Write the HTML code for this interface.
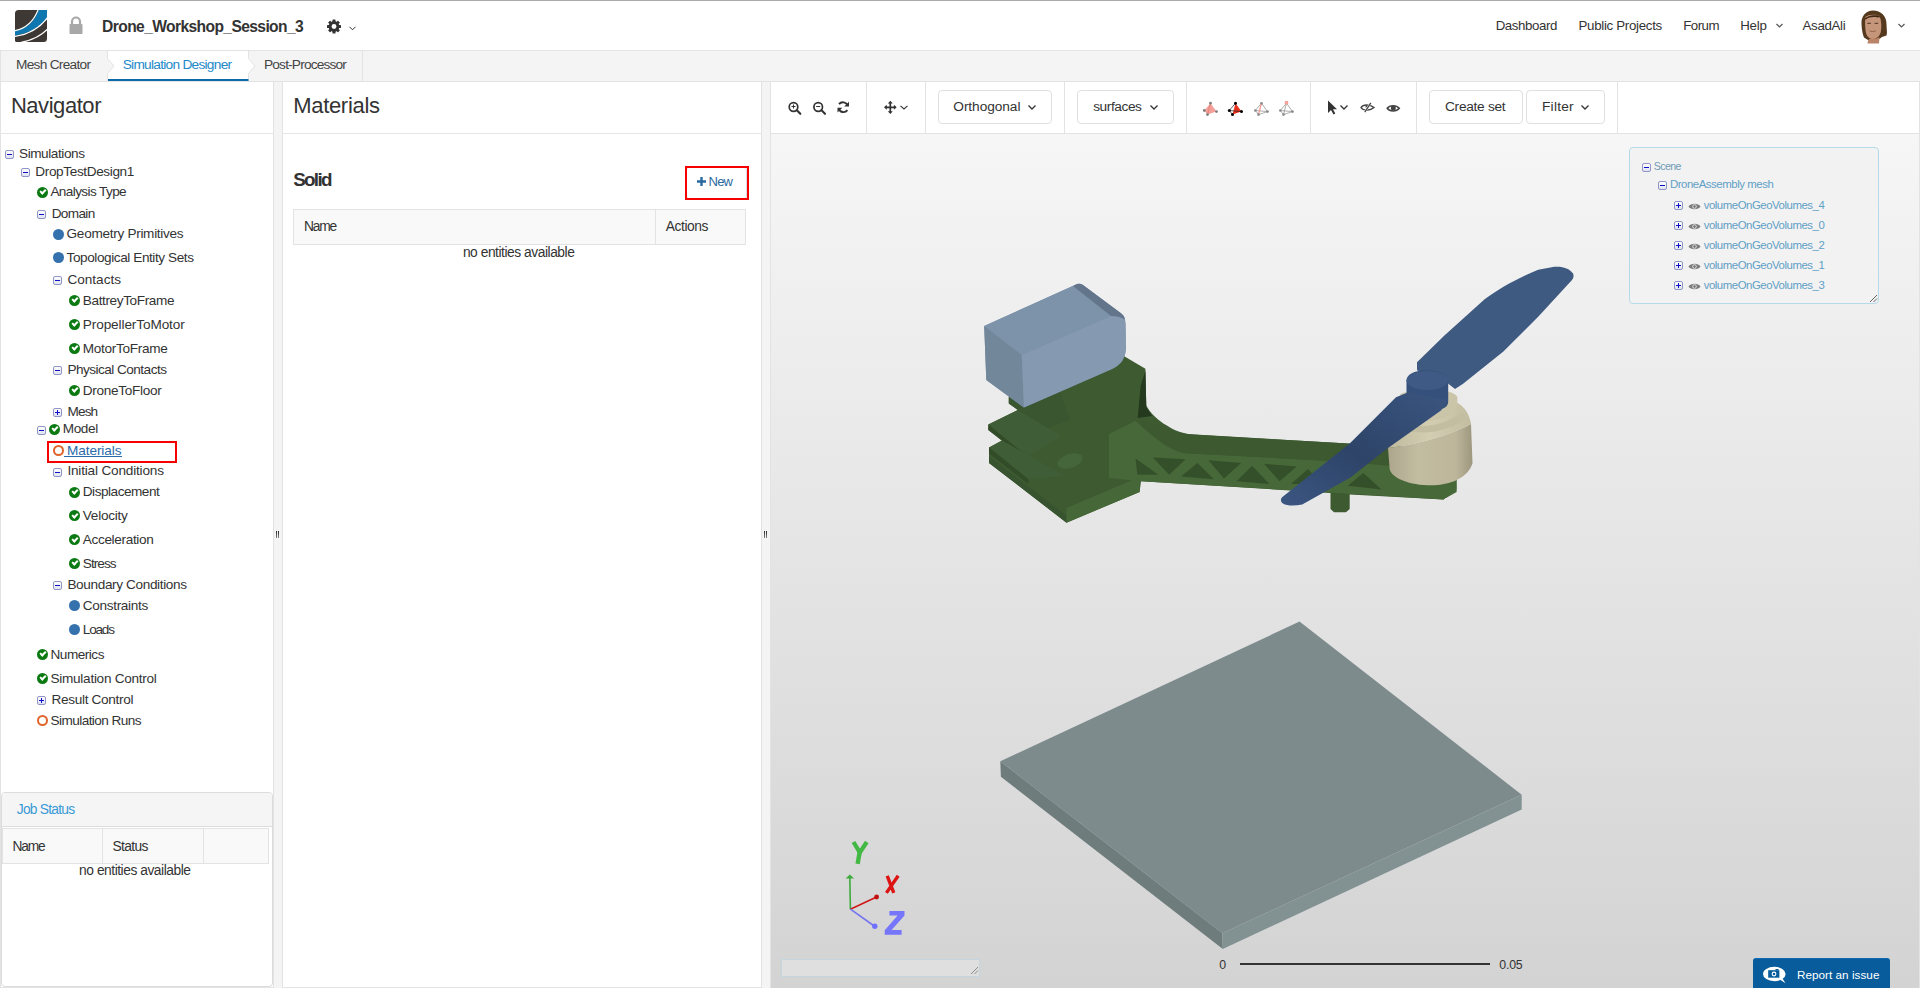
<!DOCTYPE html>
<html><head><meta charset="utf-8"><style>
html,body{margin:0;padding:0;}
body{width:1920px;height:988px;overflow:hidden;position:relative;background:#fff;font-family:"Liberation Sans", sans-serif;}
.a{position:absolute;box-sizing:border-box;}
.t{position:absolute;white-space:pre;line-height:1.117;}
.tb{position:absolute;width:9px;height:9px;box-sizing:border-box;border:1px solid #8f95c6;border-radius:2px;background:linear-gradient(#fff,#dfe2f0);}
.tb::before{content:"";position:absolute;left:1px;top:3px;width:5px;height:1px;background:#1010c8;}
.tb i{position:absolute;left:3px;top:1px;width:1px;height:5px;background:#1010c8;}
.ck{position:absolute;width:11px;height:11px;border-radius:50%;background:#0b7a12;}
.ck::after{content:"";position:absolute;left:2.6px;top:2.4px;width:4.2px;height:2.2px;border-left:2px solid #fff;border-bottom:2px solid #fff;transform:rotate(-45deg);}
.dt{position:absolute;width:11px;height:11px;border-radius:50%;background:#3571ad;}
.rg{position:absolute;width:11px;height:11px;box-sizing:border-box;border-radius:50%;border:2px solid #e0642c;}
</style></head><body>
<!-- top line -->
<div class="a" style="left:0;top:0;width:1920px;height:1px;background:#a9a9a9"></div>
<!-- tab bar -->
<div class="a" style="left:0;top:50px;width:1920px;height:32px;background:#f4f4f4;border-top:1px solid #e3e3e3;border-bottom:1px solid #e3e3e3"></div>
<!-- logo -->
<svg class="a" style="left:15px;top:10px" width="32" height="32" viewBox="0 0 32 32">
  <defs><clipPath id="lg"><path d="M3.5 0H32V28.5A3.5 3.5 0 0 1 28.5 32H1.5Q0 32 0 30.5V3.5A3.5 3.5 0 0 1 3.5 0Z"/></clipPath></defs>
  <g clip-path="url(#lg)">
    <rect width="32" height="32" fill="#3d3834"/>
    <path d="M24 -1H33V6.8C25 17.5 13.5 23.8 -1 25.8V21.2C11 19 19 13 24 -1Z" fill="#0f77b0"/>
    <path d="M23.4 -1 C18.5 12.5 10.5 18.8 -1 20.9" fill="none" stroke="#fff" stroke-width="1.2"/>
    <path d="M33 7 C25 18 13.5 24.5 -1 26.6" fill="none" stroke="#fff" stroke-width="1.3"/>
    <path d="M33 18.6 C26 26 18 30.2 6 32.3" fill="none" stroke="#fff" stroke-width="1.3"/>
  </g>
</svg>
<!-- lock -->
<svg class="a" style="left:68px;top:16px" width="16" height="19" viewBox="0 0 16 19">
  <path d="M4 8V5.5A4 4 0 0 1 12 5.5V8" fill="none" stroke="#a8a8a8" stroke-width="2.2"/>
  <rect x="1.5" y="8" width="13" height="10" rx="0.8" fill="#a8a8a8"/>
</svg>
<!-- gear -->
<svg class="a" style="left:326px;top:19px" width="16" height="15" viewBox="-8 -7.5 16 15">
  <g fill="#333"><circle r="5.4"/><rect x="-1.5" y="-7" width="3" height="3" rx="0.6" transform="rotate(0)"/><rect x="-1.5" y="-7" width="3" height="3" rx="0.6" transform="rotate(45)"/><rect x="-1.5" y="-7" width="3" height="3" rx="0.6" transform="rotate(90)"/><rect x="-1.5" y="-7" width="3" height="3" rx="0.6" transform="rotate(135)"/><rect x="-1.5" y="-7" width="3" height="3" rx="0.6" transform="rotate(180)"/><rect x="-1.5" y="-7" width="3" height="3" rx="0.6" transform="rotate(225)"/><rect x="-1.5" y="-7" width="3" height="3" rx="0.6" transform="rotate(270)"/><rect x="-1.5" y="-7" width="3" height="3" rx="0.6" transform="rotate(315)"/></g>
  <circle r="2.4" fill="#fff"/>
</svg>
<svg class="a" style="left:348px;top:25px" width="9" height="7" viewBox="0 0 9 7"><path d="M1.5 1.8 L4.5 4.8 L7.5 1.8" fill="none" stroke="#333" stroke-width="1"/></svg>
<!-- help chevron -->
<svg class="a" style="left:1775px;top:22px" width="9" height="7" viewBox="0 0 9 7"><path d="M1.5 2 L4.5 5 L7.5 2" fill="none" stroke="#555" stroke-width="1.2"/></svg>
<svg class="a" style="left:1897px;top:22px" width="9" height="7" viewBox="0 0 9 7"><path d="M1.5 2 L4.5 5 L7.5 2" fill="none" stroke="#555" stroke-width="1.2"/></svg>
<!-- avatar -->
<svg class="a" style="left:1860px;top:10px" width="28" height="34" viewBox="1860 10 28 34">
  <path d="M1861.5 24C1861 16 1866 10.5 1873 10.5C1881 10.5 1886.5 16 1886.5 24C1886.5 29 1887.5 33 1886.5 35.5L1882 37L1878 40H1868L1864 37.5C1862 33 1861.8 28 1861.5 24Z" fill="#55391f"/>
  <path d="M1865.5 17C1868 14.5 1876 14 1879.5 16C1881.5 20 1881.8 28 1880.5 33C1879 37 1876 39 1872.5 39C1869.5 39 1867 36.5 1866 33C1865 28 1864.8 21 1865.5 17Z" fill="#c6967a"/>
  <path d="M1867.5 43.5C1868 40 1868.5 38 1872 39C1875 39 1878 38 1879.5 37L1879 43.5Z" fill="#b98468"/>
  <path d="M1864.5 19C1867 15.5 1874 14.5 1878.5 15.5C1881 17 1882 19 1882.5 22C1882 18 1880 16.5 1877.5 17.5C1874 16.5 1868.5 17 1866 19.5Z" fill="#3e2814"/>
  <path d="M1867.3 23.3h3.6 M1874.6 23.3h3.6" stroke="#4a3324" stroke-width="1"/>
  <path d="M1869.5 30.8C1871.5 31.8 1874 31.8 1876 30.8" stroke="#8f5f4a" stroke-width="0.9" fill="none"/>
</svg>
<!-- tabs: active white tab with arrows -->
<svg class="a" style="left:0;top:51px" width="370" height="30" viewBox="0 0 370 30">
  <path d="M107.5 0 H248.5 V7.5 L255 15 L248.5 22.5 V30 H107.5 V22.5 L114 15 L107.5 7.5 Z" fill="#fff"/>
  <path d="M107.5 0 V7.5 L114 15 L107.5 22.5 V30" fill="none" stroke="#e3e3e3" stroke-width="1"/>
  <path d="M248.5 0 V7.5 L255 15 L248.5 22.5 V30" fill="none" stroke="#e3e3e3" stroke-width="1"/>
  <path d="M362.5 0 V30" fill="none" stroke="#e3e3e3" stroke-width="1"/>
  <rect x="108" y="28" width="140.5" height="2" fill="#0b6aa8"/>
</svg>

<div class="a" style="left:0;top:51px;width:1px;height:31px;background:#e3e3e3"></div>

<!-- panels background -->
<div class="a" style="left:0;top:82px;width:1920px;height:906px;background:#f4f4f4"></div>
<div class="a" style="left:0;top:81px;width:274px;height:907px;background:#fff;border:1px solid #e3e3e3"></div>
<div class="a" style="left:0;top:133px;width:274px;height:1px;background:#e6e6e6"></div>
<div class="a" style="left:282px;top:81px;width:480px;height:907px;background:#fff;border:1px solid #e3e3e3"></div>
<div class="a" style="left:282px;top:133px;width:480px;height:1px;background:#e6e6e6"></div>
<!-- viewer -->
<div class="a" style="left:770px;top:81px;width:1150px;height:907px;background:linear-gradient(#f6f6f6 0px,#f6f6f6 52px,#d3d3d3 907px);border:1px solid #e3e3e3;border-bottom:none"></div>
<div class="a" style="left:770px;top:81px;width:1150px;height:53px;background:#fff;border:1px solid #e3e3e3"></div>
<!-- materials table -->
<div class="a" style="left:293px;top:209px;width:453px;height:36px;background:#f9f9f9;border:1px solid #e3e3e3"></div>
<div class="a" style="left:655px;top:209px;width:1px;height:36px;background:#e3e3e3"></div>
<!-- new button -->
<div class="a" style="left:686px;top:167px;width:61px;height:32px;border:1px solid #d8dde3;border-radius:3px;background:#fff"></div>
<div class="a" style="left:684.5px;top:165.5px;width:64px;height:34px;border:2px solid #f60000"></div>
<svg class="a" style="left:696px;top:176px" width="11" height="11" viewBox="0 0 11 11"><path d="M5.5 1V10M1 5.5H10" stroke="#2a6aa0" stroke-width="2.4"/></svg>
<!-- materials highlight box -->
<div class="a" style="left:47px;top:441px;width:130px;height:22px;border:2px solid #f60000"></div>
<!-- job status -->
<div class="a" style="left:1px;top:792px;width:272px;height:195px;border:1px solid #dcdcdc;border-radius:4px;background:#fff"></div>
<div class="a" style="left:2px;top:793px;width:270px;height:34px;background:#f5f5f5;border-bottom:1px solid #dcdcdc;border-radius:3px 3px 0 0"></div>
<div class="a" style="left:2px;top:828px;width:267px;height:36px;background:#f9f9f9;border:1px solid #e3e3e3"></div>
<div class="a" style="left:102px;top:828px;width:1px;height:36px;background:#e3e3e3"></div>
<div class="a" style="left:203px;top:828px;width:1px;height:36px;background:#e3e3e3"></div>
<!-- resize handles -->
<div class="a" style="left:276px;top:531px;width:1px;height:7px;background:linear-gradient(#222,#888)"></div>
<div class="a" style="left:278px;top:531px;width:1px;height:7px;background:linear-gradient(#222,#888)"></div>
<div class="a" style="left:764px;top:531px;width:1px;height:7px;background:linear-gradient(#222,#888)"></div>
<div class="a" style="left:766px;top:531px;width:1px;height:7px;background:linear-gradient(#222,#888)"></div>

<div class="a" style="left:64px;top:456px;width:58px;height:1.4px;background:#2a6aa8"></div>

<!-- toolbar separators -->
<div class="a" style="left:866px;top:82px;width:1px;height:51px;background:#e3e3e3"></div>
<div class="a" style="left:925px;top:82px;width:1px;height:51px;background:#e3e3e3"></div>
<div class="a" style="left:1064px;top:82px;width:1px;height:51px;background:#e3e3e3"></div>
<div class="a" style="left:1186px;top:82px;width:1px;height:51px;background:#e3e3e3"></div>
<div class="a" style="left:1310px;top:82px;width:1px;height:51px;background:#e3e3e3"></div>
<div class="a" style="left:1416px;top:82px;width:1px;height:51px;background:#e3e3e3"></div>
<div class="a" style="left:1617px;top:82px;width:1px;height:51px;background:#e3e3e3"></div>
<!-- buttons -->
<div class="a" style="left:938px;top:90px;width:114px;height:34px;border:1px solid #e0e0e0;border-radius:4px"></div>
<div class="a" style="left:1077px;top:90px;width:97px;height:34px;border:1px solid #e0e0e0;border-radius:4px"></div>
<div class="a" style="left:1429px;top:90px;width:94px;height:34px;border:1px solid #e0e0e0;border-radius:4px"></div>
<div class="a" style="left:1526px;top:90px;width:79px;height:34px;border:1px solid #e0e0e0;border-radius:4px"></div>
<!-- chevrons -->
<svg class="a" style="left:1027px;top:104px" width="10" height="7" viewBox="0 0 10 7"><path d="M1.5 1.5 L5 5 L8.5 1.5" fill="none" stroke="#333" stroke-width="1.3"/></svg>
<svg class="a" style="left:1149px;top:104px" width="10" height="7" viewBox="0 0 10 7"><path d="M1.5 1.5 L5 5 L8.5 1.5" fill="none" stroke="#333" stroke-width="1.3"/></svg>
<svg class="a" style="left:1580px;top:104px" width="10" height="7" viewBox="0 0 10 7"><path d="M1.5 1.5 L5 5 L8.5 1.5" fill="none" stroke="#333" stroke-width="1.3"/></svg>
<svg class="a" style="left:899px;top:104px" width="10" height="7" viewBox="0 0 10 7"><path d="M1.5 1.8 L5 5 L8.5 1.8" fill="none" stroke="#333" stroke-width="1.1"/></svg>
<svg class="a" style="left:1339px;top:104px" width="10" height="7" viewBox="0 0 10 7"><path d="M1.5 1.5 L5 5 L8.5 1.5" fill="none" stroke="#333" stroke-width="1.3"/></svg>
<!-- zoom in/out, refresh, move -->
<svg class="a" style="left:780px;top:92px" width="130" height="30" viewBox="780 92 130 30">
  <circle cx="793.5" cy="107" r="4.3" fill="none" stroke="#333" stroke-width="1.7"/>
  <path d="M796.8 110.3L800.3 113.8" stroke="#333" stroke-width="2.1" stroke-linecap="round"/>
  <path d="M791.5 106.5H795.5M793.5 104.5V108.5" stroke="#333" stroke-width="1"/>
  <circle cx="818.2" cy="107" r="4.3" fill="none" stroke="#333" stroke-width="1.7"/>
  <path d="M821.5 110.3L825 113.8" stroke="#333" stroke-width="2.1" stroke-linecap="round"/>
  <path d="M816.2 106.5H820.2" stroke="#333" stroke-width="1"/>
  <path d="M847.6 105.5A5 5 0 0 0 839 104.2" fill="none" stroke="#333" stroke-width="1.9"/>
  <path d="M838.8 108.8A5 5 0 0 0 847.4 110.2" fill="none" stroke="#333" stroke-width="1.9"/>
  <path d="M849 101.8V106.6H844.2Z" fill="#333"/>
  <path d="M837.5 112.6V107.8H842.3Z" fill="#333"/>
  <path d="M890.3 102.5V112.5M885.5 107.3H895.2" stroke="#333" stroke-width="1.7"/>
  <path d="M890.3 100.8L892.8 103.6H887.8Z M890.3 114L892.8 111.2H887.8Z M884 107.3L886.8 104.8V109.8Z M896.7 107.3L893.9 104.8V109.8Z" fill="#333"/>
</svg>
<!-- tetra icons -->
<svg class="a" style="left:1202.0px;top:100px" width="17" height="17" viewBox="-2 0 17 17"><path d="M6.5 3.2L0.3 10.5L3.5 14.6L12.5 11.6Z" fill="#f4a098"/><path d="M6.5 3.2L3.5 14.6" stroke="#e07c70" stroke-width="0.8"/><circle cx="6.5" cy="3.2" r="1.4" fill="#808080"/><circle cx="0.3" cy="10.5" r="1.4" fill="#808080"/><circle cx="12.5" cy="11.6" r="1.4" fill="#808080"/><circle cx="3.5" cy="14.6" r="1.4" fill="#808080"/></svg>
<svg class="a" style="left:1227.0px;top:100px" width="17" height="17" viewBox="-2 0 17 17"><path d="M6.5 3.2L3.5 14.6L12.5 11.6Z" fill="#e8321e"/><path d="M6.5 3.2L0.3 10.5L3.5 14.6M0.3 10.5L12.5 11.6" fill="none" stroke="#222" stroke-width="0.7"/><circle cx="6.5" cy="3.2" r="1.5" fill="#000"/><circle cx="0.3" cy="10.5" r="1.5" fill="#000"/><circle cx="12.5" cy="11.6" r="1.5" fill="#000"/><circle cx="3.5" cy="14.6" r="1.5" fill="#000"/></svg>
<svg class="a" style="left:1252.5px;top:100px" width="17" height="17" viewBox="-2 0 17 17"><path d="M6.5 3.2L0.3 10.5L3.5 14.6L12.5 11.6ZM0.3 10.5L12.5 11.6" fill="none" stroke="#777" stroke-width="0.6"/><path d="M6.5 3.2L3.5 14.6" stroke="#f49a90" stroke-width="1.3"/><circle cx="6.5" cy="3.2" r="1.3" fill="#8a8a8a"/><circle cx="0.3" cy="10.5" r="1.3" fill="#8a8a8a"/><circle cx="12.5" cy="11.6" r="1.3" fill="#8a8a8a"/><circle cx="3.5" cy="14.6" r="1.3" fill="#8a8a8a"/></svg>
<svg class="a" style="left:1277.5px;top:100px" width="17" height="17" viewBox="-2 0 17 17"><path d="M6.5 3.2L0.3 10.5L3.5 14.6L12.5 11.6ZM0.3 10.5L12.5 11.6M6.5 3.2L3.5 14.6" fill="none" stroke="#777" stroke-width="0.6"/><circle cx="0.3" cy="10.5" r="1.3" fill="#8a8a8a"/><circle cx="12.5" cy="11.6" r="1.3" fill="#8a8a8a"/><circle cx="3.5" cy="14.6" r="1.3" fill="#8a8a8a"/><circle cx="6.5" cy="2.7" r="1.9" fill="#f7a096"/></svg>
<!-- cursor -->
<svg class="a" style="left:1327px;top:100px" width="11" height="15" viewBox="0 0 11 15"><path d="M1 0.5V13L4 10L6.5 14.5L8.3 13.5L6 9.3H10Z" fill="#333"/></svg>
<!-- eye slash -->
<svg class="a" style="left:1360px;top:102px" width="15" height="11" viewBox="0 0 15 11"><path d="M1 5.5C3 2 10 2 14 5.5C10 9 3 9 1 5.5Z" fill="none" stroke="#444" stroke-width="1.5"/><path d="M6 5.5A1.8 1.8 0 0 1 8.5 3.8" fill="none" stroke="#444" stroke-width="1.4"/><path d="M4.5 10.5L11 0.5" stroke="#fff" stroke-width="2.2"/><path d="M4.8 10.2L10.8 0.8" stroke="#444" stroke-width="1.3"/></svg>
<!-- eye -->
<svg class="a" style="left:1385.5px;top:102.5px" width="15" height="11" viewBox="0 0 15 11"><path d="M1.2 5.3C3.5 1.8 10.5 1.8 13.3 5.3C10.5 8.8 3.5 8.8 1.2 5.3Z" fill="none" stroke="#444" stroke-width="1.6"/><circle cx="7.3" cy="5.1" r="2.5" fill="#444"/></svg>

<svg class="a" style="left:770px;top:134px" width="1150" height="854" viewBox="770 134 1150 854">
<defs>
  <linearGradient id="blade2" x1="0" y1="1" x2="1" y2="0"><stop offset="0" stop-color="#3b5682"/><stop offset="0.45" stop-color="#2e4468"/><stop offset="1" stop-color="#3a5580"/></linearGradient>
  <linearGradient id="motorside" x1="0" y1="0" x2="1" y2="0"><stop offset="0" stop-color="#aca68c"/><stop offset="0.35" stop-color="#c2bca1"/><stop offset="0.8" stop-color="#bdb69b"/><stop offset="1" stop-color="#9d977e"/></linearGradient>
  <linearGradient id="motortop" x1="0" y1="0" x2="1" y2="0"><stop offset="0" stop-color="#bfb99d"/><stop offset="0.5" stop-color="#d3cdb2"/><stop offset="1" stop-color="#c2bca0"/></linearGradient>
</defs>
<!-- ground plate -->
<path d="M1299.5 621.6L1521.7 794.7L1222.4 933.2L1000.3 761.3Z" fill="#7e8b8d"/>
<path d="M1000.3 761.3L1222.4 933.2L1222.8 948.9L1000.9 776.7Z" fill="#6f7c7c"/>
<path d="M1222.4 933.2L1521.7 794.7L1521.7 809.6L1222.8 948.9Z" fill="#829192"/>

<!-- green frame base silhouette -->
<path d="M1008.8 396.7L1124.2 356.3L1145.4 368.8L1146.3 405.4C1150 413 1158 420 1166 425C1175 431 1183 434 1195 434.5L1348 443.5L1400 446L1456 478L1456.3 489.4L1443.5 499.4L1349.7 494.5L1349.7 509L1346 512.2L1334 512.2L1330.5 509L1330.5 493L1141 481.2L1139.6 491.9L1066.5 522.7L989 463L989 447.6L1002 440.4L988.3 429.9L988.3 424.6L1017.9 410.1L1008.8 403.5Z" fill="#3e5a31"/>
<!-- arm side face (lighter) -->
<path d="M1109 434L1135.4 420.8C1150 434 1165 448 1183 453L1348.7 462L1400 466L1456.3 478.4L1456.3 489.4L1443.5 499.4L1141 481.2L1109 478Z" fill="#476838"/>
<!-- arm top face -->
<path d="M1137.3 418.3C1150 424 1160 428 1172 431C1180 433.5 1190 434.5 1200 435L1348 443.5L1390 447L1390 466L1348.7 462L1183 453C1165 448 1150 434 1137.3 418.3Z" fill="#3d5930"/>
<!-- dark shadow at block corner -->
<path d="M1145.4 370.8L1146.3 407.3L1152 416L1137.7 418L1140.6 386.2Z" fill="#24391d"/>
<!-- platform lighter face -->

<!-- triangle holes -->
<g fill="#34502a">
<path d="M1135.5 458.4L1158.3 474.8L1137.3 474.8Z"/>
<path d="M1152.8 457.5L1185.6 459.3L1169.2 474.8Z"/>
<path d="M1197.4 462.9L1213.9 479.3L1181 476.6Z"/>
<path d="M1208.4 460.2L1241.2 462.9L1223.9 478.4Z"/>
<path d="M1252.1 465.7L1269.4 483.9L1236.6 481.2Z"/>
<path d="M1264 463.8L1296.8 466.6L1279.5 481.2Z"/>
<path d="M1308 469L1322 484L1291 484Z"/>
<path d="M1363.3 473L1381.5 489.4L1347.8 485.7Z"/>
</g>
<!-- left plates detail -->
<path d="M988.3 424.6L1017.9 410.1L1062 436L1027.8 456.8Z" fill="#3f5d36"/>
<path d="M988.3 424.6L1027.8 456.8L1027.8 461L988.3 429.9Z" fill="#324c2a"/>
<path d="M989 447.6L1002 440.4L1066 476L1028.4 479.2Z" fill="#3f5d36"/>
<path d="M989 447.6L1028.4 479.2L1028.4 484L989 453.6Z" fill="#324c2a"/>
<path d="M989 456.2L1066.6 516L1066.6 522.7L989 463Z" fill="#37532f"/>
<path d="M1066.5 522.7L1066.5 508L1139.6 477L1139.6 491.9Z" fill="#466838"/>
<path d="M1017.9 410.1L1008.8 403.5L1008.8 396.7L1023.9 407.5L1060 392L1070 420L1048 428Z" fill="#3a5630"/>
<ellipse cx="1070" cy="461" rx="13" ry="7" transform="rotate(-18 1070 461)" fill="#44663a"/>
<!-- battery -->
<linearGradient id="bband" x1="0" y1="0" x2="1" y2="-0.6"><stop offset="0" stop-color="#7d93aa"/><stop offset="0.6" stop-color="#5d6f84"/><stop offset="1" stop-color="#7e92a8"/></linearGradient>
<path d="M984.2 326L1077 284Q1080 283 1083 285L1121 313.3Q1125.5 316 1125.5 324L1125.9 349C1125 360 1120 365 1112 369L1023.9 407.5L986.3 379.9Z" fill="#7b90a6"/>
<path d="M984.2 326L1073 286L1111 316L1021.8 355.1Z" fill="#7d93aa"/>
<path d="M1073 286L1077 284Q1080 283 1083 285L1121 313.3Q1124 315.5 1125 319L1111 316Z" fill="#62758b"/>
<path d="M984.2 326L1021.8 355.1L1023.9 407.5L986.3 379.9Z" fill="#73879b"/>
<path d="M1021.8 355.1L1111 316Q1125.5 316 1125.5 324L1125.9 349C1125 360 1120 365 1112 369L1023.9 407.5Z" fill="#8599b0"/>

<!-- motor base green -->
<path d="M1388 466L1456.6 478L1456.6 492L1446 498L1400 494Z" fill="#476838"/>
<!-- motor body -->
<path d="M1388 448C1405 446 1440 440 1471 424L1472.5 463.3C1468 478 1450 486 1427.7 485.3C1405 484 1392 477 1389.7 469.4Z" fill="url(#motorside)"/>
<path d="M1388 448C1390 428 1420 405 1450 401C1462 402 1469 412 1471 424C1440 440 1405 446 1388 448Z" fill="url(#motortop)"/>
<path d="M1398 421C1420 432 1448 424 1462 412C1464 414 1466 416 1467 418C1448 432 1418 438 1396 426Z" fill="#c3bda2"/>
<!-- small ring -->
<path d="M1400.4 394C1420 386 1450 388 1457.3 396.5L1457.3 408C1450 420 1420 426 1400.4 416Z" fill="#cac4a8"/>
<!-- propeller upper blade -->
<path d="M1417 362.3L1444.4 335.5L1484.6 299.3C1500 288 1520 277 1538.2 269.8L1554.3 266.8C1562 266 1569 268 1573.1 273.5C1574 276 1573.5 278 1572 280L1538.2 316.7L1503.4 351.6L1463.1 383.8L1455 389L1448 383.5L1417 370.3Z" fill="#3f5a80"/>
<!-- hub -->
<path d="M1406.5 381C1406.5 374 1415 370.3 1427 370.3C1440 370.3 1448.2 375 1448.2 382L1448.2 402C1448.2 408 1440 411 1427 411C1415 411 1406.5 406 1406.5 401Z" fill="#35507a"/>
<ellipse cx="1427.3" cy="380.5" rx="20.8" ry="9.5" fill="#3e5a85"/>
<!-- propeller lower blade -->
<path d="M1396 397.2L1406.5 393L1448.2 400L1441 410.6L1388 448.1L1350.5 477.6L1302.2 504.5C1295 506 1287 506 1283 503.5C1280 501 1280.5 498 1283 496.4L1310.2 475L1350.5 442.8Z" fill="url(#blade2)"/>
</svg>

<!-- scene tree box -->
<div class="a" style="left:1629px;top:147px;width:250px;height:157px;border:1px solid #b5dbe9;border-radius:4px;background:rgba(242,242,242,0.9)"></div>
<svg class="a" style="left:1869px;top:294px" width="9" height="9" viewBox="0 0 9 9"><path d="M1 8L8 1M4.5 8L8 4.5" stroke="#555" stroke-width="0.9"/></svg>
<div class="tb" style="left:1641.5px;top:162.5px"></div>
<div class="tb" style="left:1658px;top:181px"></div>
<div class="tb" style="left:1674px;top:201px"><i></i></div>
<div class="tb" style="left:1674px;top:221px"><i></i></div>
<div class="tb" style="left:1674px;top:241px"><i></i></div>
<div class="tb" style="left:1674px;top:261px"><i></i></div>
<div class="tb" style="left:1674px;top:281px"><i></i></div>
<svg class="a" style="left:1687.5px;top:201.5px" width="13" height="9" viewBox="0 0 13 9"><path d="M0.5 4.5C2.5 0.8 10.5 0.8 12.5 4.5C10.5 8.2 2.5 8.2 0.5 4.5Z" fill="#7b7b7b"/><circle cx="6.5" cy="4.5" r="2.2" fill="#dcdcdc"/><circle cx="6.5" cy="4.5" r="1.2" fill="#6b6b6b"/></svg>
<svg class="a" style="left:1687.5px;top:221.5px" width="13" height="9" viewBox="0 0 13 9"><path d="M0.5 4.5C2.5 0.8 10.5 0.8 12.5 4.5C10.5 8.2 2.5 8.2 0.5 4.5Z" fill="#7b7b7b"/><circle cx="6.5" cy="4.5" r="2.2" fill="#dcdcdc"/><circle cx="6.5" cy="4.5" r="1.2" fill="#6b6b6b"/></svg>
<svg class="a" style="left:1687.5px;top:241.5px" width="13" height="9" viewBox="0 0 13 9"><path d="M0.5 4.5C2.5 0.8 10.5 0.8 12.5 4.5C10.5 8.2 2.5 8.2 0.5 4.5Z" fill="#7b7b7b"/><circle cx="6.5" cy="4.5" r="2.2" fill="#dcdcdc"/><circle cx="6.5" cy="4.5" r="1.2" fill="#6b6b6b"/></svg>
<svg class="a" style="left:1687.5px;top:261.5px" width="13" height="9" viewBox="0 0 13 9"><path d="M0.5 4.5C2.5 0.8 10.5 0.8 12.5 4.5C10.5 8.2 2.5 8.2 0.5 4.5Z" fill="#7b7b7b"/><circle cx="6.5" cy="4.5" r="2.2" fill="#dcdcdc"/><circle cx="6.5" cy="4.5" r="1.2" fill="#6b6b6b"/></svg>
<svg class="a" style="left:1687.5px;top:281.5px" width="13" height="9" viewBox="0 0 13 9"><path d="M0.5 4.5C2.5 0.8 10.5 0.8 12.5 4.5C10.5 8.2 2.5 8.2 0.5 4.5Z" fill="#7b7b7b"/><circle cx="6.5" cy="4.5" r="2.2" fill="#dcdcdc"/><circle cx="6.5" cy="4.5" r="1.2" fill="#6b6b6b"/></svg>
<!-- axes -->
<svg class="a" style="left:830px;top:830px" width="90" height="115" viewBox="830 830 90 115">
  <path d="M850.4 909.2L849.8 877" stroke="#3eaa3e" stroke-width="1.6"/>
  <path d="M845.6 878.5L849.8 874.5L854 878.5Z" fill="#3eaa3e"/>
  <path d="M850.4 909.2L875.5 897.5" stroke="#d01818" stroke-width="1.6"/>
  <circle cx="876.6" cy="897" r="2.4" fill="#c01010"/>
  <path d="M850.4 909.2L873.5 925.5" stroke="#7575f0" stroke-width="1.6"/>
  <circle cx="874.8" cy="926.3" r="2.7" fill="#7070ff"/>
  <path d="M853.5 842 L859.8 852.5 L866.8 842" fill="none" stroke="#44b844" stroke-width="4.2" stroke-linejoin="miter"/>
  <path d="M859.8 851.5 L857.6 863.8" fill="none" stroke="#44b844" stroke-width="4.4"/>
  <path d="M887.2 875.8 L893.8 892.9 M898.2 875.8 L886.4 892.9" fill="none" stroke="#dd1414" stroke-width="3.4"/>
  <path d="M889.4 910.9H904.5V915.5L891.6 930H901.6V934.8H884.7V930.2L897.6 915.5H889.4Z" fill="#7676fa"/>
</svg>
<!-- scale bar -->
<div class="a" style="left:1240px;top:963px;width:250px;height:2px;background:#333"></div>
<!-- textarea -->
<div class="a" style="left:781px;top:959px;width:199px;height:18px;border:1px solid #c5d5de;background:#dfdfdf"></div>
<svg class="a" style="left:970px;top:966px" width="9" height="9" viewBox="0 0 9 9"><path d="M1 8L8 1M4.5 8L8 4.5" stroke="#777" stroke-width="0.8"/></svg>
<!-- report issue -->
<div class="a" style="left:1753px;top:958px;width:137px;height:35px;background:#085c9b;border-top:1px solid #0a6ab5;border-radius:3px 3px 0 0"></div>
<svg class="a" style="left:1762px;top:966px" width="26" height="18" viewBox="0 0 26 18">
  <ellipse cx="12.3" cy="8" rx="11.3" ry="7.2" fill="#fff"/>
  <path d="M17 13L23.5 17.2L19.5 11Z" fill="#fff"/>
  <rect x="6.2" y="4.2" width="11.2" height="7.5" fill="#085c9b"/>
  <rect x="13.5" y="3" width="3" height="1.5" fill="#085c9b"/>
  <circle cx="12" cy="8" r="2.4" fill="#fff"/><circle cx="12" cy="8" r="1.3" fill="#085c9b"/>
</svg>

<div class="tb" style="left:5px;top:150px"></div>
<div class="tb" style="left:21px;top:168px"></div>
<div class="ck" style="left:37.0px;top:186.6px"></div>
<div class="tb" style="left:37px;top:210px"></div>
<div class="dt" style="left:53.0px;top:228.7px"></div>
<div class="dt" style="left:53.0px;top:252.4px"></div>
<div class="tb" style="left:53px;top:276px"></div>
<div class="ck" style="left:69.0px;top:294.8px"></div>
<div class="ck" style="left:69.0px;top:318.8px"></div>
<div class="ck" style="left:69.0px;top:342.9px"></div>
<div class="tb" style="left:53px;top:366px"></div>
<div class="ck" style="left:69.0px;top:385.0px"></div>
<div class="tb" style="left:53px;top:408px"><i></i></div>
<div class="tb" style="left:37px;top:426px"></div>
<div class="ck" style="left:49px;top:423.6px"></div>
<div class="rg" style="left:52.6px;top:445.4px"></div>
<div class="tb" style="left:53px;top:468px"></div>
<div class="ck" style="left:69.0px;top:486.7px"></div>
<div class="ck" style="left:69.0px;top:510.4px"></div>
<div class="ck" style="left:69.0px;top:534.4px"></div>
<div class="ck" style="left:69.0px;top:558.1px"></div>
<div class="tb" style="left:53px;top:581px"></div>
<div class="dt" style="left:69.0px;top:600.2px"></div>
<div class="dt" style="left:69.0px;top:624.0px"></div>
<div class="ck" style="left:37.0px;top:649.0px"></div>
<div class="ck" style="left:37.0px;top:672.8px"></div>
<div class="tb" style="left:37px;top:696px"><i></i></div>
<div class="rg" style="left:37.0px;top:714.9px"></div>
<div class="t" style="left:102.1px;top:18.1px;font-size:15.60px;letter-spacing:-0.604px;color:#333;font-weight:bold;">Drone_Workshop_Session_3</div>
<div class="t" style="left:1495.7px;top:18.8px;font-size:13.30px;letter-spacing:-0.421px;color:#333;font-weight:normal;">Dashboard</div>
<div class="t" style="left:1578.5px;top:18.8px;font-size:13.30px;letter-spacing:-0.305px;color:#333;font-weight:normal;">Public Projects</div>
<div class="t" style="left:1683.2px;top:18.8px;font-size:13.30px;letter-spacing:-0.532px;color:#333;font-weight:normal;">Forum</div>
<div class="t" style="left:1740.2px;top:18.8px;font-size:13.30px;letter-spacing:-0.185px;color:#333;font-weight:normal;">Help</div>
<div class="t" style="left:1802.5px;top:18.8px;font-size:13.30px;letter-spacing:-0.316px;color:#333;font-weight:normal;">AsadAli</div>
<div class="t" style="left:16.0px;top:57.4px;font-size:13.70px;letter-spacing:-0.717px;color:#444;font-weight:normal;">Mesh Creator</div>
<div class="t" style="left:122.7px;top:57.4px;font-size:13.70px;letter-spacing:-0.728px;color:#2389c8;font-weight:normal;">Simulation Designer</div>
<div class="t" style="left:264.0px;top:57.4px;font-size:13.70px;letter-spacing:-0.819px;color:#444;font-weight:normal;">Post-Processor</div>
<div class="t" style="left:10.9px;top:94.1px;font-size:22.00px;letter-spacing:-0.445px;color:#333;font-weight:normal;">Navigator</div>
<div class="t" style="left:293.2px;top:94.1px;font-size:22.00px;letter-spacing:-0.306px;color:#333;font-weight:normal;">Materials</div>
<div class="t" style="left:293.2px;top:168.9px;font-size:18.85px;letter-spacing:-1.697px;color:#333;font-weight:bold;">Solid</div>
<div class="t" style="left:304.0px;top:219.2px;font-size:13.80px;letter-spacing:-1.204px;color:#333;font-weight:normal;">Name</div>
<div class="t" style="left:665.8px;top:219.2px;font-size:13.80px;letter-spacing:-0.426px;color:#333;font-weight:normal;">Actions</div>
<div class="t" style="left:462.9px;top:244.5px;font-size:13.80px;letter-spacing:-0.461px;color:#333;font-weight:normal;">no entities available</div>
<div class="t" style="left:708.5px;top:174.5px;font-size:13.00px;letter-spacing:-0.754px;color:#2a6aa0;font-weight:normal;">New</div>
<div class="t" style="left:16.8px;top:802.4px;font-size:13.80px;letter-spacing:-0.756px;color:#3a9ad6;font-weight:normal;">Job Status</div>
<div class="t" style="left:12.6px;top:838.6px;font-size:13.76px;letter-spacing:-1.239px;color:#333;font-weight:normal;">Name</div>
<div class="t" style="left:112.5px;top:838.6px;font-size:13.80px;letter-spacing:-0.665px;color:#333;font-weight:normal;">Status</div>
<div class="t" style="left:79.1px;top:862.8px;font-size:13.80px;letter-spacing:-0.466px;color:#333;font-weight:normal;">no entities available</div>
<div class="t" style="left:953.3px;top:99.4px;font-size:13.70px;letter-spacing:-0.065px;color:#333;font-weight:normal;">Orthogonal</div>
<div class="t" style="left:1093.2px;top:99.4px;font-size:13.70px;letter-spacing:-0.425px;color:#333;font-weight:normal;">surfaces</div>
<div class="t" style="left:1445.0px;top:99.4px;font-size:13.70px;letter-spacing:-0.278px;color:#333;font-weight:normal;">Create set</div>
<div class="t" style="left:1542.0px;top:99.4px;font-size:13.70px;letter-spacing:0.251px;color:#333;font-weight:normal;">Filter</div>
<div class="t" style="left:1653.7px;top:161.4px;font-size:10.60px;letter-spacing:-0.564px;color:#6f9bb3;font-weight:normal;">Scene</div>
<div class="t" style="left:1669.9px;top:178.4px;font-size:11.40px;letter-spacing:-0.442px;color:#5fa0c6;font-weight:normal;">DroneAssembly mesh</div>
<div class="t" style="left:1703.7px;top:198.5px;font-size:11.40px;letter-spacing:-0.458px;color:#5fa0c6;font-weight:normal;">volumeOnGeoVolumes_4</div>
<div class="t" style="left:1703.7px;top:218.7px;font-size:11.40px;letter-spacing:-0.458px;color:#5fa0c6;font-weight:normal;">volumeOnGeoVolumes_0</div>
<div class="t" style="left:1703.7px;top:238.5px;font-size:11.40px;letter-spacing:-0.458px;color:#5fa0c6;font-weight:normal;">volumeOnGeoVolumes_2</div>
<div class="t" style="left:1703.7px;top:258.5px;font-size:11.40px;letter-spacing:-0.458px;color:#5fa0c6;font-weight:normal;">volumeOnGeoVolumes_1</div>
<div class="t" style="left:1703.7px;top:278.5px;font-size:11.40px;letter-spacing:-0.458px;color:#5fa0c6;font-weight:normal;">volumeOnGeoVolumes_3</div>
<div class="t" style="left:1219.3px;top:959.0px;font-size:12.30px;letter-spacing:0.000px;color:#333;font-weight:normal;">0</div>
<div class="t" style="left:1499.3px;top:959.0px;font-size:12.30px;letter-spacing:-0.180px;color:#333;font-weight:normal;">0.05</div>
<div class="t" style="left:1796.9px;top:968.0px;font-size:11.70px;letter-spacing:0.047px;color:#fff;font-weight:normal;">Report an issue</div>
<div class="t" style="left:19.0px;top:145.5px;font-size:13.60px;letter-spacing:-0.430px;color:#333;font-weight:normal;">Simulations</div>
<div class="t" style="left:35.3px;top:163.5px;font-size:13.60px;letter-spacing:-0.373px;color:#333;font-weight:normal;">DropTestDesign1</div>
<div class="t" style="left:50.4px;top:184.3px;font-size:13.60px;letter-spacing:-0.613px;color:#333;font-weight:normal;">Analysis Type</div>
<div class="t" style="left:51.7px;top:205.6px;font-size:13.60px;letter-spacing:-0.653px;color:#333;font-weight:normal;">Domain</div>
<div class="t" style="left:66.6px;top:226.4px;font-size:13.60px;letter-spacing:-0.296px;color:#333;font-weight:normal;">Geometry Primitives</div>
<div class="t" style="left:66.6px;top:250.1px;font-size:13.60px;letter-spacing:-0.429px;color:#333;font-weight:normal;">Topological Entity Sets</div>
<div class="t" style="left:67.4px;top:271.7px;font-size:13.60px;letter-spacing:0.000px;color:#333;font-weight:normal;">Contacts</div>
<div class="t" style="left:82.8px;top:292.5px;font-size:13.60px;letter-spacing:-0.388px;color:#333;font-weight:normal;">BattreyToFrame</div>
<div class="t" style="left:82.8px;top:316.5px;font-size:13.60px;letter-spacing:-0.104px;color:#333;font-weight:normal;">PropellerToMotor</div>
<div class="t" style="left:82.8px;top:340.6px;font-size:13.60px;letter-spacing:-0.302px;color:#333;font-weight:normal;">MotorToFrame</div>
<div class="t" style="left:67.4px;top:361.7px;font-size:13.60px;letter-spacing:-0.531px;color:#333;font-weight:normal;">Physical Contacts</div>
<div class="t" style="left:82.8px;top:382.7px;font-size:13.60px;letter-spacing:-0.317px;color:#333;font-weight:normal;">DroneToFloor</div>
<div class="t" style="left:67.4px;top:403.5px;font-size:13.60px;letter-spacing:-0.819px;color:#333;font-weight:normal;">Mesh</div>
<div class="t" style="left:62.7px;top:421.3px;font-size:13.60px;letter-spacing:-0.386px;color:#333;font-weight:normal;">Model</div>
<div class="t" style="left:67.0px;top:443.1px;font-size:13.60px;letter-spacing:-0.084px;color:#2a6aa8;font-weight:normal;">Materials</div>
<div class="t" style="left:67.4px;top:463.4px;font-size:13.60px;letter-spacing:-0.188px;color:#333;font-weight:normal;">Initial Conditions</div>
<div class="t" style="left:82.8px;top:484.4px;font-size:13.60px;letter-spacing:-0.490px;color:#333;font-weight:normal;">Displacement</div>
<div class="t" style="left:82.8px;top:508.1px;font-size:13.60px;letter-spacing:-0.253px;color:#333;font-weight:normal;">Velocity</div>
<div class="t" style="left:82.8px;top:532.1px;font-size:13.60px;letter-spacing:-0.349px;color:#333;font-weight:normal;">Acceleration</div>
<div class="t" style="left:82.8px;top:555.8px;font-size:13.60px;letter-spacing:-0.949px;color:#333;font-weight:normal;">Stress</div>
<div class="t" style="left:67.4px;top:576.9px;font-size:13.60px;letter-spacing:-0.364px;color:#333;font-weight:normal;">Boundary Conditions</div>
<div class="t" style="left:82.8px;top:597.9px;font-size:13.60px;letter-spacing:-0.328px;color:#333;font-weight:normal;">Constraints</div>
<div class="t" style="left:82.8px;top:621.7px;font-size:13.60px;letter-spacing:-1.214px;color:#333;font-weight:normal;">Loads</div>
<div class="t" style="left:50.5px;top:646.7px;font-size:13.60px;letter-spacing:-0.490px;color:#333;font-weight:normal;">Numerics</div>
<div class="t" style="left:50.5px;top:670.5px;font-size:13.60px;letter-spacing:-0.278px;color:#333;font-weight:normal;">Simulation Control</div>
<div class="t" style="left:51.6px;top:691.5px;font-size:13.60px;letter-spacing:-0.328px;color:#333;font-weight:normal;">Result Control</div>
<div class="t" style="left:50.5px;top:712.6px;font-size:13.60px;letter-spacing:-0.566px;color:#333;font-weight:normal;">Simulation Runs</div>
</body></html>
